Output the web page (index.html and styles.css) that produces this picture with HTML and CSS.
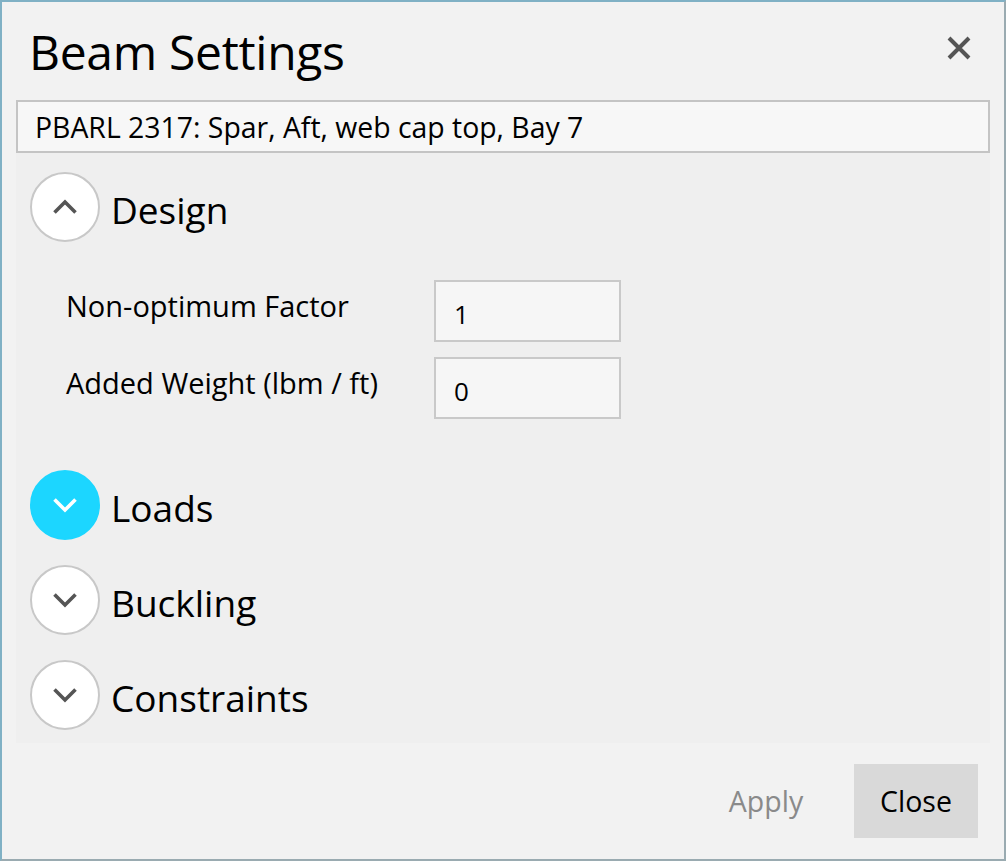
FILE: index.html
```html
<!DOCTYPE html>
<html lang="en">
<head>
    <meta charset="UTF-8">
    <title>Beam Settings</title>
    <link rel="stylesheet" href="styles.css">
</head>
<body>
    <div class="window">
        <div class="titlebar">
            <div class="title">Beam Settings</div>
            <button class="close-x" title="Close">
                <svg width="26" height="26" viewBox="0 0 26 26">
                    <path d="M3 3 L23 23 M23 3 L3 23" stroke="#555" stroke-width="4" fill="none"/>
                </svg>
            </button>
        </div>

        <div class="subject">PBARL 2317: Spar, Aft, web cap top, Bay 7</div>

        <div class="panel">
            <div class="section open">
                <div class="section-head">
                    <span class="toggle">
                        <svg width="26" height="16" viewBox="0 0 26 16">
                            <path d="M2.5 13.5 L13 3 L23.5 13.5" stroke="#555" stroke-width="3.6" fill="none"/>
                        </svg>
                    </span>
                    <span class="section-title">Design</span>
                </div>
                <div class="section-body">
                    <div class="field">
                        <label class="field-label">Non-optimum Factor</label>
                        <div class="field-input">1</div>
                    </div>
                    <div class="field">
                        <label class="field-label">Added Weight (lbm / ft)</label>
                        <div class="field-input">0</div>
                    </div>
                </div>
            </div>

            <div class="section">
                <div class="section-head">
                    <span class="toggle active">
                        <svg width="26" height="16" viewBox="0 0 26 16">
                            <path d="M2.5 2.5 L13 13 L23.5 2.5" stroke="#fff" stroke-width="3.6" fill="none"/>
                        </svg>
                    </span>
                    <span class="section-title">Loads</span>
                </div>
            </div>

            <div class="section">
                <div class="section-head">
                    <span class="toggle">
                        <svg width="26" height="16" viewBox="0 0 26 16">
                            <path d="M2.5 2.5 L13 13 L23.5 2.5" stroke="#555" stroke-width="3.6" fill="none"/>
                        </svg>
                    </span>
                    <span class="section-title">Buckling</span>
                </div>
            </div>

            <div class="section">
                <div class="section-head">
                    <span class="toggle">
                        <svg width="26" height="16" viewBox="0 0 26 16">
                            <path d="M2.5 2.5 L13 13 L23.5 2.5" stroke="#555" stroke-width="3.6" fill="none"/>
                        </svg>
                    </span>
                    <span class="section-title">Constraints</span>
                </div>
            </div>
        </div>

        <div class="footer">
            <button class="btn btn-apply">Apply</button>
            <button class="btn btn-close">Close</button>
        </div>
    </div>
</body>
</html>
```

FILE: styles.css
```css
/* dialog */
body {
    margin: 0;
    padding: 0;
    background-color: #f2f2f2;
    font-family: "Open Sans", "Noto Sans", sans-serif;
    color: #000;
}
.window {
    width: 1006px;
    height: 861px;
    box-sizing: border-box;
    border: 2px solid #80b1c5;
    border-right-color: #9aabb1;
    border-bottom-color: #9aabb1;
    background-color: #f2f2f2;
    display: flex;
    flex-direction: column;
}
.titlebar {
    height: 98px;
    display: flex;
    align-items: center;
    justify-content: space-between;
    padding: 0 32px 0 27px;
}
.title {
    font-size: 48px;
    letter-spacing: -0.3px;
}
.close-x {
    border: none;
    background: none;
    padding: 0;
    margin-top: -6px;
    width: 26px;
    height: 26px;
    cursor: pointer;
}
.close-x svg {
    display: block;
}
.subject {
    margin: 0 14px;
    height: 53px;
    box-sizing: border-box;
    border: 2px solid #c4c4c4;
    background-color: #f7f7f7;
    padding-left: 17px;
    display: flex;
    align-items: center;
    font-size: 28.4px;
}
.panel {
    margin: 0 14px;
    height: 590px;
    background-color: #efefef;
    padding: 19px 14px 0;
    box-sizing: border-box;
}
.section {
    margin-bottom: 25px;
}
.section-head {
    display: flex;
    align-items: center;
    height: 70px;
}
.toggle {
    width: 70px;
    height: 70px;
    box-sizing: border-box;
    border-radius: 50%;
    border: 2px solid #c8c8c8;
    background-color: #fff;
    display: flex;
    align-items: center;
    justify-content: center;
}
.toggle.active {
    border-color: #1cd6ff;
    background-color: #1cd6ff;
}
.section-title {
    margin-left: 11px;
    padding-top: 4px;
    font-size: 37px;
}
.section-body {
    padding: 38px 0 26px 36px;
}
.field {
    display: flex;
    align-items: flex-start;
    margin-bottom: 15px;
}
.field:last-child {
    margin-bottom: 0;
}
.field-label {
    width: 368px;
    padding-top: 6px;
    font-size: 29px;
}
.field-input {
    width: 187px;
    height: 62px;
    box-sizing: border-box;
    border: 2px solid #c9c9c9;
    background-color: #f6f6f6;
    padding: 14px 0 0 18px;
    font-size: 26px;
}
.footer {
    flex: 1;
    display: flex;
    justify-content: flex-end;
    align-items: flex-start;
    padding: 21px 26px 0 0;
    gap: 26px;
}
.btn {
    width: 124px;
    height: 74px;
    border: none;
    font-family: "Open Sans", "Noto Sans", sans-serif;
    font-size: 28.5px;
    cursor: pointer;
}
.btn-apply {
    background: none;
    color: #8a8a8a;
}
.btn-close {
    background-color: #d9d9d9;
    color: #000;
}
```
